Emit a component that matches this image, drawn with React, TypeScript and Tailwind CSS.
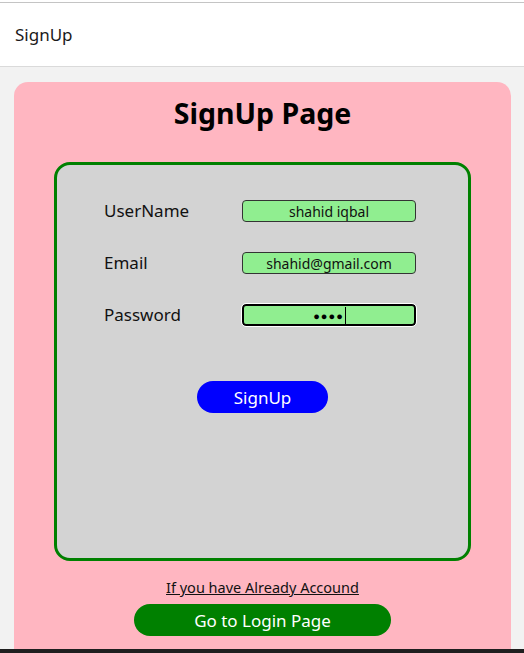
import React from "react";

const FONT = { fontFamily: '"Noto Sans", "Open Sans", Arial, sans-serif' };

function Field({ label, value }: { label: string; value: string }) {
  return (
    <div className="flex h-[22px] items-center">
      <span className="w-[138px] text-[17px] text-[#111]">{label}</span>
      <input
        readOnly
        value={value}
        className="h-[22px] w-[174px] rounded-[4px] border border-[#333] bg-[#90ee90] px-1 text-center text-[14px] text-[#111] outline-none"
      />
    </div>
  );
}

export default function App() {
  return (
    <div className="flex h-[653px] flex-col overflow-hidden bg-[#f2f2f2]" style={FONT}>
      <div className="h-[2px] bg-white" />
      <div className="h-px bg-[#c4c4c4]" />
      <header className="flex h-[64px] items-center border-b border-[#dadada] bg-white px-[15px]">
        <span className="text-[17px] text-[#1a1a1a]">SignUp</span>
      </header>

      <main className="flex flex-1 flex-col pl-[14px] pr-[13px] pt-[15px]">
        <div className="flex flex-1 flex-col items-center rounded-t-[14px] bg-[#ffb6c1] pt-[13px]">
          <h1 className="text-[28.5px] font-bold leading-[36px] text-black">SignUp Page</h1>

          <div className="mt-[31px] flex h-[399px] w-[417px] flex-col rounded-[16px] border-[3px] border-[#008000] bg-[#d3d3d3] pl-[47px] pt-[35px]">
            <div className="flex flex-col gap-[30px]">
              <Field label="UserName" value="shahid iqbal" />
              <Field label="Email" value="shahid@gmail.com" />
              <div className="flex h-[22px] items-center">
                <span className="w-[138px] text-[17px] text-[#111]">Password</span>
                <div className="flex h-[22px] w-[174px] items-center justify-center rounded-[4px] border-2 border-black bg-[#90ee90] pl-[1px] outline outline-1 outline-white">
                  <span className="text-[11px] leading-none tracking-[1px] text-black">●●●●</span>
                  <span className="ml-[1px] h-[17px] w-px bg-black" />
                </div>
              </div>
            </div>

            <button className="mt-[55px] ml-[93px] h-[32px] w-[131px] rounded-full bg-[#0000ff] pt-[1px] text-[17px] text-white">
              SignUp
            </button>
          </div>

          <a href="#" className="mt-[16px] text-[14.5px] leading-[20px] text-[#111] underline">
            If you have Already Accound
          </a>
          <button className="mt-[7px] h-[32px] w-[257px] rounded-full bg-[#008000] pt-[2px] text-[17px] text-white">
            Go to Login Page
          </button>
        </div>
      </main>

      <div className="h-[4px] bg-[#1f1f1f]" />
    </div>
  );
}
